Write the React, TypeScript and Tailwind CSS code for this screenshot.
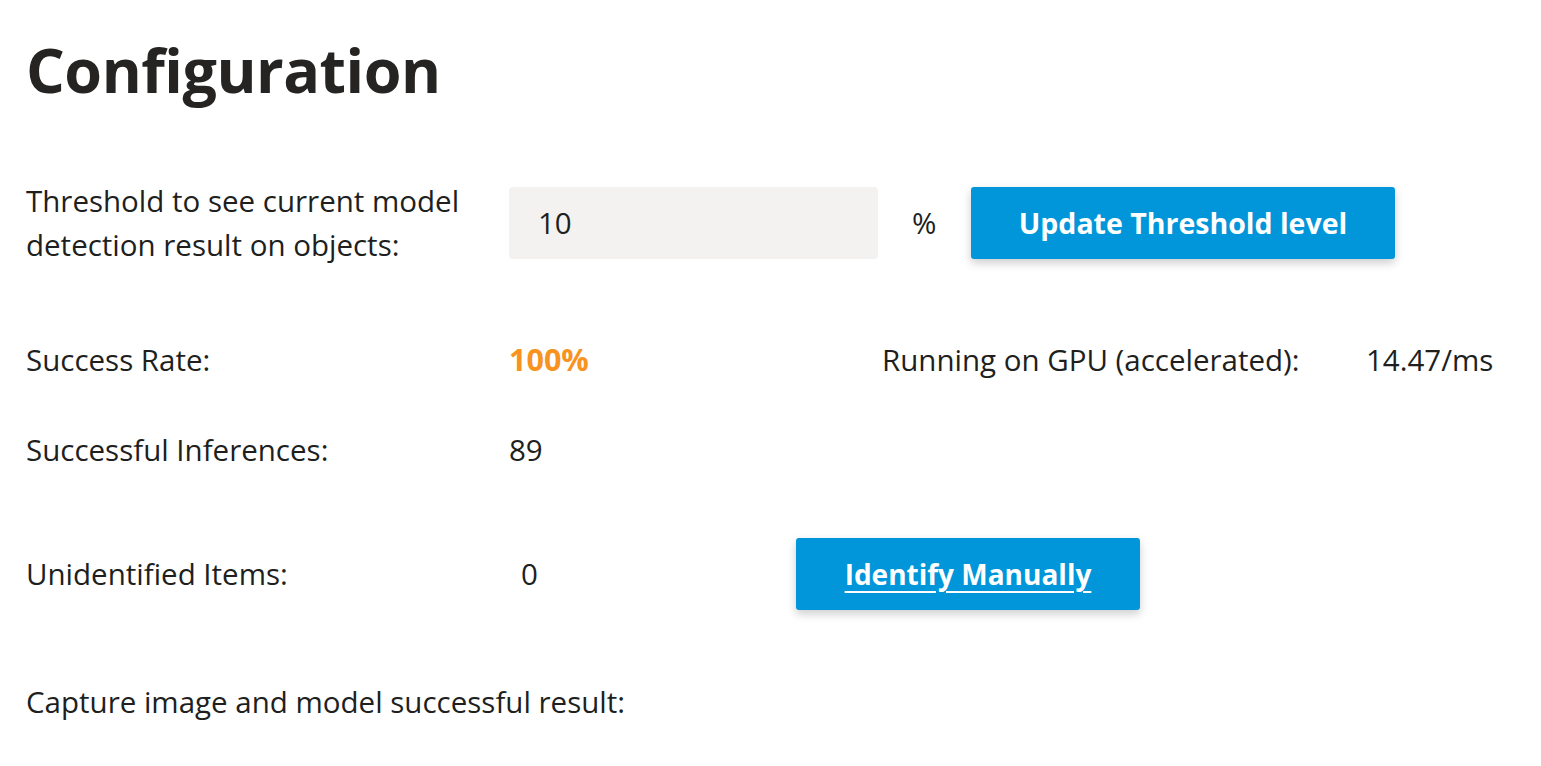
import React from "react";

export default function App() {
  const font = { fontFamily: '"Open Sans", "Noto Sans", sans-serif' };
  return (
    <div className="min-h-screen w-full bg-white text-[#201f1e]" style={font}>
      <div className="flex flex-col pl-[26px] pt-[29px]">
        <h1 className="h-[82px] text-[61px] font-bold leading-[82px] tracking-[-0.5px] text-[#252423]">
          Configuration
        </h1>

        <div className="mt-[76px] flex h-[72px] items-center text-[29.5px]">
          <div className="w-[483px] leading-[44px]">
            Threshold to see current model
            <br />
            detection result on objects:
          </div>
          <div className="flex h-[72px] w-[369px] items-center rounded-[4px] bg-[#f3f2f1] pl-[29px]">
            10
          </div>
          <div className="ml-[34px] w-[25px]">%</div>
          <button className="ml-[34px] h-[72px] w-[424px] rounded-[3px] bg-[#0096d9] text-[28.5px] font-bold text-white shadow-[0_4px_10px_rgba(0,0,0,0.2)]">
            Update Threshold level
          </button>
        </div>

        <div className="mt-[79px] flex h-[44px] items-center text-[29.5px]">
          <div className="w-[483px]">Success Rate:</div>
          <div className="w-[373px] text-[30.5px] font-bold text-[#f7931e]">100%</div>
          <div className="w-[484px]">Running on GPU (accelerated):</div>
          <div>14.47/ms</div>
        </div>

        <div className="mt-[46px] flex h-[44px] items-center text-[29.5px]">
          <div className="w-[483px]">Successful Inferences:</div>
          <div>89</div>
        </div>

        <div className="mt-[66px] flex h-[72px] items-center text-[29.5px]">
          <div className="w-[483px]">Unidentified Items:</div>
          <div className="w-[287px] pl-[12px]">0</div>
          <button className="h-[72px] w-[344px] rounded-[3px] bg-[#0096d9] text-[28px] font-bold text-white underline underline-offset-[6px] shadow-[0_4px_10px_rgba(0,0,0,0.2)]">
            Identify Manually
          </button>
        </div>

        <div className="mt-[70px] flex h-[44px] items-center text-[29.5px]">
          Capture image and model successful result:
        </div>
      </div>
    </div>
  );
}
